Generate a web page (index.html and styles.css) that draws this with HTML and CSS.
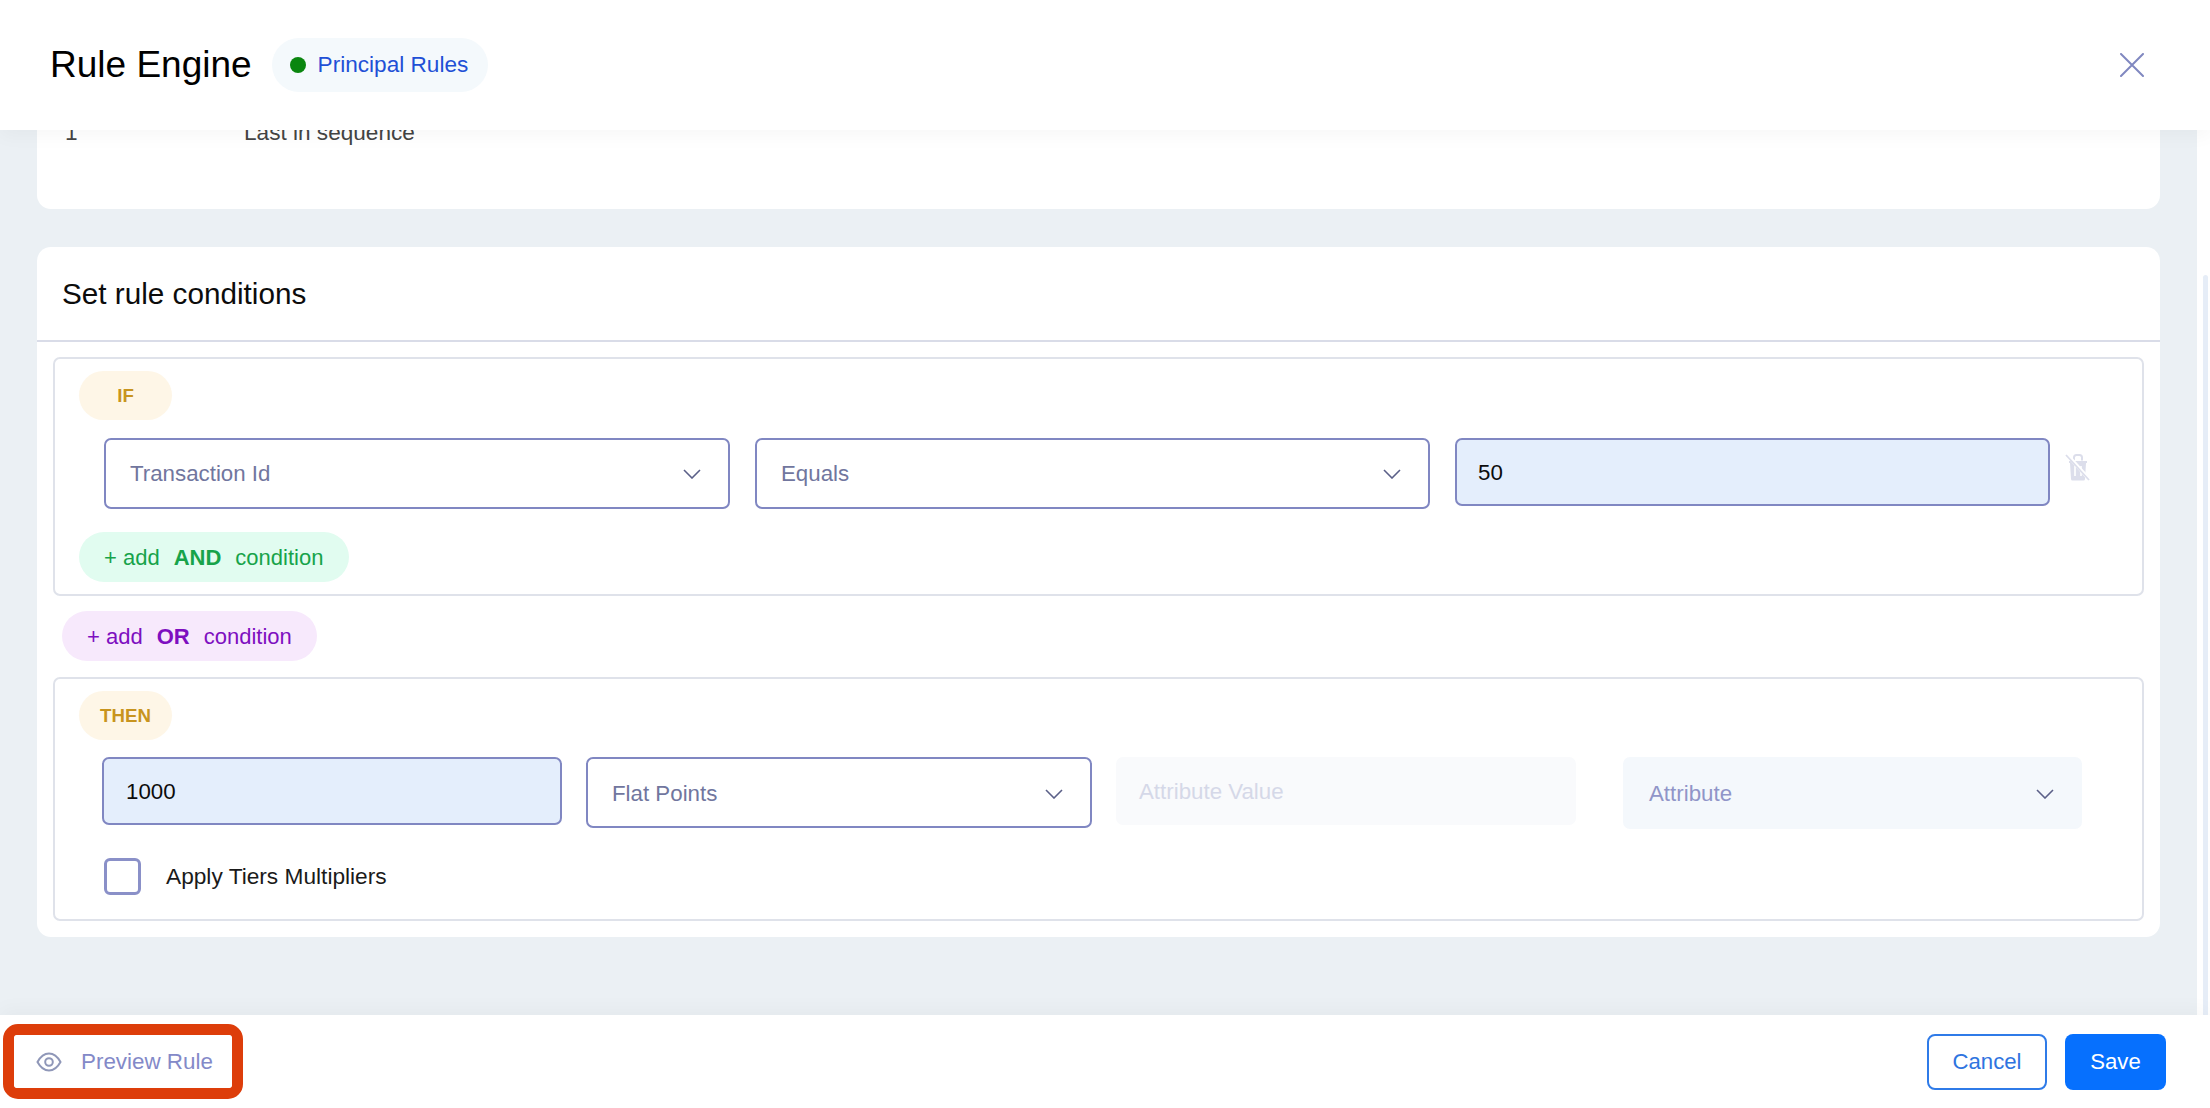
FILE: index.html
```html
<!DOCTYPE html>
<html lang="en">
<head>
<meta charset="utf-8">
<title>Rule Engine</title>
<link rel="stylesheet" href="styles.css">
</head>
<body>
<div class="page">
  <header class="top">
    <h1 class="title">Rule Engine</h1>
    <div class="badge"><span class="dot"></span><span class="badge-text">Principal Rules</span></div>
    <svg class="close" width="24" height="24" viewBox="0 0 24 24"><path d="M1 1L23 23M23 1L1 23" fill="none" stroke="#8088c0" stroke-width="2" stroke-linecap="round"/></svg>
  </header>

  <div class="middle">
    <main class="content">
      <section class="card card-prev">
        <div class="prev-row"><span class="prev-num">1</span><span>Last in sequence</span></div>
      </section>

      <section class="card card-rule">
        <h2 class="card-title">Set rule conditions</h2>
        <div class="box box-if">
          <span class="tag">IF</span>
          <div class="row row-if">
            <div class="field select w-a"><span>Transaction Id</span><svg class="chev" width="18" height="10" viewBox="0 0 18 10"><path d="M1 1L9 9L17 1" fill="none" stroke="#5b6088" stroke-width="1.6"/></svg></div>
            <div class="field select w-b"><span>Equals</span><svg class="chev" width="18" height="10" viewBox="0 0 18 10"><path d="M1 1L9 9L17 1" fill="none" stroke="#5b6088" stroke-width="1.6"/></svg></div>
            <div class="field value w-c"><span>50</span></div>
            <svg class="trash" width="26" height="28" viewBox="0 0 26 28">
              <path d="M4 8H22V10H21L20 26a1.5 1.5 0 0 1-1.5 1.5H7.500A1.5 1.5 0 0 1 6 26L5 10H4Z" fill="#dcdeeb"/>
              <path d="M9 7.500V4.500a2.500 2.500 0 0 1 2.500-2.500h3a2.500 2.500 0 0 1 2.500 2.500V7.500" fill="none" stroke="#dcdeeb" stroke-width="2"/>
              <path d="M10 13V23M16 13V23" stroke="#fff" stroke-width="1.600"/>
              <path d="M2 1.500L24 26" stroke="#fff" stroke-width="3.500"/>
              <path d="M1 2L24 27" stroke="#dcdeeb" stroke-width="1.800"/>
            </svg>
          </div>
          <button class="pill pill-and"><span>+ add</span><b>AND</b><span>condition</span></button>
        </div>

        <button class="pill pill-or"><span>+ add</span><b>OR</b><span>condition</span></button>

        <div class="box box-then">
          <span class="tag">THEN</span>
          <div class="row row-then">
            <div class="field value w-d"><span>1000</span></div>
            <div class="field select w-e"><span>Flat Points</span><svg class="chev" width="18" height="10" viewBox="0 0 18 10"><path d="M1 1L9 9L17 1" fill="none" stroke="#5b6088" stroke-width="1.6"/></svg></div>
            <div class="field off-input w-d"><span>Attribute Value</span></div>
            <div class="field off-select w-f"><span>Attribute</span><svg class="chev" width="18" height="10" viewBox="0 0 18 10"><path d="M1 1L9 9L17 1" fill="none" stroke="#5b6088" stroke-width="1.6"/></svg></div>
          </div>
          <label class="check"><span class="checkbox"></span><span>Apply Tiers Multipliers</span></label>
        </div>
      </section>
    </main>
    <div class="rail"><div class="thumb"></div></div>
  </div>

  <footer class="bottom">
    <div class="mark">
      <button class="preview">
        <svg width="26" height="20" viewBox="0 0 26 20"><path d="M1.500 10C4.500 4.500 8.500 1.500 13 1.500S21.500 4.500 24.500 10C21.500 15.500 17.500 18.500 13 18.500S4.500 15.500 1.500 10Z" fill="none" stroke="#8f97b8" stroke-width="2"/><circle cx="13" cy="10" r="3.800" fill="none" stroke="#8f97b8" stroke-width="2"/></svg>
        <span>Preview Rule</span>
      </button>
    </div>
    <div class="actions">
      <button class="btn btn-cancel">Cancel</button>
      <button class="btn btn-save">Save</button>
    </div>
  </footer>
</div>
</body>
</html>
```
FILE: styles.css
```css
* { box-sizing: border-box; }
html, body { margin: 0; height: 100%; }
body { font-family: "Liberation Sans", Arial, sans-serif; font-size: 22.3px; color: #1a1a1a; background: #fff; overflow: hidden; }
button { font-family: inherit; font-size: inherit; margin: 0; }

.page { display: flex; flex-direction: column; height: 1108px; }

.top { position: relative; z-index: 2; flex: 0 0 130px; display: flex; align-items: center; padding: 0 66px 0 50px; background: #fff; box-shadow: 0 6px 18px rgba(0,0,0,.035); }
.title { margin: 0; font-size: 37px; font-weight: 400; color: #000; }
.badge { display: flex; align-items: center; width: 216px; height: 54px; margin-left: 20px; padding: 0 0 0 18px; border-radius: 27px; background: #f4f9fc; }
.dot { width: 16px; height: 16px; border-radius: 50%; background: #0a860f; margin-right: 12px; }
.badge-text { font-size: 22.6px; color: #1f50d6; }
.close { margin-left: auto; }

.middle { flex: 1; min-height: 0; display: flex; }
.content { flex: 1; min-width: 0; overflow: hidden; padding: 0 37px; background: #ebf0f4; }
.rail { flex: 0 0 13px; padding: 145px 2px 0 6px; background: #fff; }
.thumb { height: 100%; border-radius: 3px 3px 0 0; background: #e6edf7; }

.card { background: #fff; border-radius: 14px; }
.card-prev { height: 79px; border-radius: 0 0 14px 14px; overflow: hidden; }
.prev-row { display: flex; margin-top: -10px; height: 26px; line-height: 26px; color: #444; font-size: 22.6px; }
.prev-num { width: 207px; padding-left: 28px; }

.card-rule { margin-top: 38px; padding: 0 16px 16px; }
.card-title { margin: 0 -16px 15px; height: 95px; padding: 0 0 0 25px; display: flex; align-items: center; font-size: 29.7px; font-weight: 400; color: #0c0c0c; border-bottom: 2px solid #d9dce8; }

.box { border: 2px solid #dfe2ea; border-radius: 7px; padding: 12px 24px; }
.box-if { height: 239px; }
.box-then { height: 244px; margin-top: 16px; }

.tag { display: flex; align-items: center; justify-content: center; width: 93px; height: 49px; border-radius: 25px; background: #fef6e7; color: #c8941e; font-size: 18.7px; font-weight: 700; }

.row { display: flex; align-items: flex-start; }
.row-if { margin: 18px 0 23px 25px; gap: 25px; }
.row-then { margin: 17px 0 0 23px; gap: 24px; }
.row-if .value { padding-left: 21px; }
.row-then .value { padding-left: 22px; }

.field { display: flex; align-items: center; border-radius: 7px; padding: 1px 24px 0; }
.select { height: 71px; border: 2px solid #8087c2; color: #71769e; background: #fff; justify-content: space-between; }
.row-then .select { padding-top: 2px; }
.value { height: 68px; border: 2px solid #8087c2; background: #e4eefc; color: #0c0c0c; }
.off-input { height: 68px; background: #f9fafc; color: #d5d8e8; padding-left: 23px; }
.off-select { height: 72px; background: #f4f8fc; color: #9095c8; justify-content: space-between; margin-left: 23px; padding-left: 26px; }
.w-a { width: 626px; }
.w-b { width: 675px; }
.w-c { width: 595px; }
.w-d { width: 460px; }
.w-e { width: 506px; }
.w-f { width: 459px; }
.chev { flex: none; margin-right: 3px; }
.off-select .chev { margin-right: 4px; }
.trash { flex: none; margin: 15px 0 0 -10px; }

.pill { display: flex; align-items: center; gap: 14px; height: 50px; padding: 2px 25px 0; border: 0; border-radius: 25px; font-size: 22px; }
.pill-and { width: 270px; background: #e1fcf0; color: #17a34a; }
.pill-or { width: 255px; margin: 15px 0 0 9px; background: #f7e9fc; color: #7e0fc0; }

.check { display: flex; align-items: center; gap: 25px; margin: 29px 0 0 25px; font-size: 22.7px; }
.checkbox { width: 37px; height: 37px; border: 3px solid #8a90c8; border-radius: 6px; }

.bottom { position: relative; z-index: 2; flex: 0 0 93px; display: flex; align-items: center; justify-content: space-between; padding: 0 44px 0 3px; background: #fff; box-shadow: 0 -6px 18px rgba(0,0,0,.03); }
.mark { width: 240px; height: 75px; border: 11px solid #dd3d0a; border-radius: 15px; }
.preview { display: flex; align-items: center; gap: 19px; width: 100%; height: 100%; padding: 0 0 0 22px; border: 0; background: #fff; color: #8389c8; font-size: 22.4px; border-radius: 3px; }
.actions { display: flex; gap: 18px; }
.btn { height: 56px; border-radius: 8px; font-size: 22.2px; }
.btn-cancel { width: 120px; border: 2px solid #2f7be8; background: #fff; color: #2f74e0; }
.btn-save { width: 101px; border: 0; background: #0670fe; color: #fff; }
```
